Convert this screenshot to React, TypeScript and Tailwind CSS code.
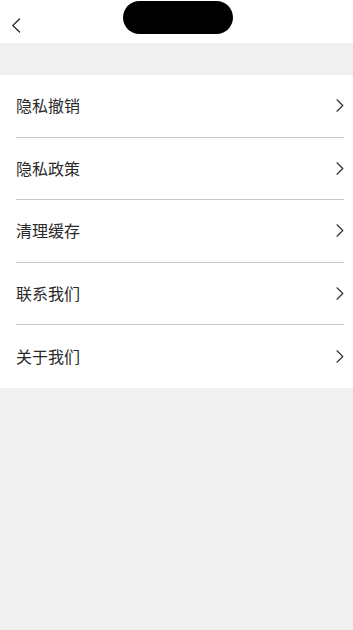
import React from "react";

const items = ["隐私撤销", "隐私政策", "清理缓存", "联系我们", "关于我们"];

function Chevron() {
  return (
    <svg width="8" height="13" viewBox="0 0 8 13" fill="none">
      <path d="M1 0.8 L6.8 6.5 L1 12.2" stroke="#333" strokeWidth="1.2" strokeLinecap="round" strokeLinejoin="round" />
    </svg>
  );
}

export default function App() {
  return (
    <div
      className="w-[353px] h-[630px] bg-[#f0f0f0] flex flex-col overflow-hidden"
      style={{ fontFamily: '"Noto Sans CJK SC", "Noto Sans", sans-serif' }}
    >
      <div className="h-[43px] bg-white relative shrink-0">
        <div className="absolute left-[11px] top-[18px]">
          <svg width="10" height="15" viewBox="0 0 10 15" fill="none">
            <path d="M8.5 1 L1.8 7.5 L8.5 14" stroke="#222" strokeWidth="1.2" strokeLinecap="round" strokeLinejoin="round" />
          </svg>
        </div>
        <div className="absolute left-[123px] top-[1px] w-[110px] h-[33px] rounded-full bg-black" />
      </div>
      <div className="h-[32px] shrink-0" />
      <div className="bg-white flex flex-col pl-[16px] pr-[9px]">
        {items.map((t, i) => (
          <div
            key={t}
            className={`h-[62.6px] flex items-center justify-between ${i < items.length - 1 ? "border-b border-[#c8c8c8]" : ""}`}
          >
            <span className="text-[16px] text-[#2a2a2a] leading-none -mt-[1px]">{t}</span>
            <Chevron />
          </div>
        ))}
      </div>
    </div>
  );
}
